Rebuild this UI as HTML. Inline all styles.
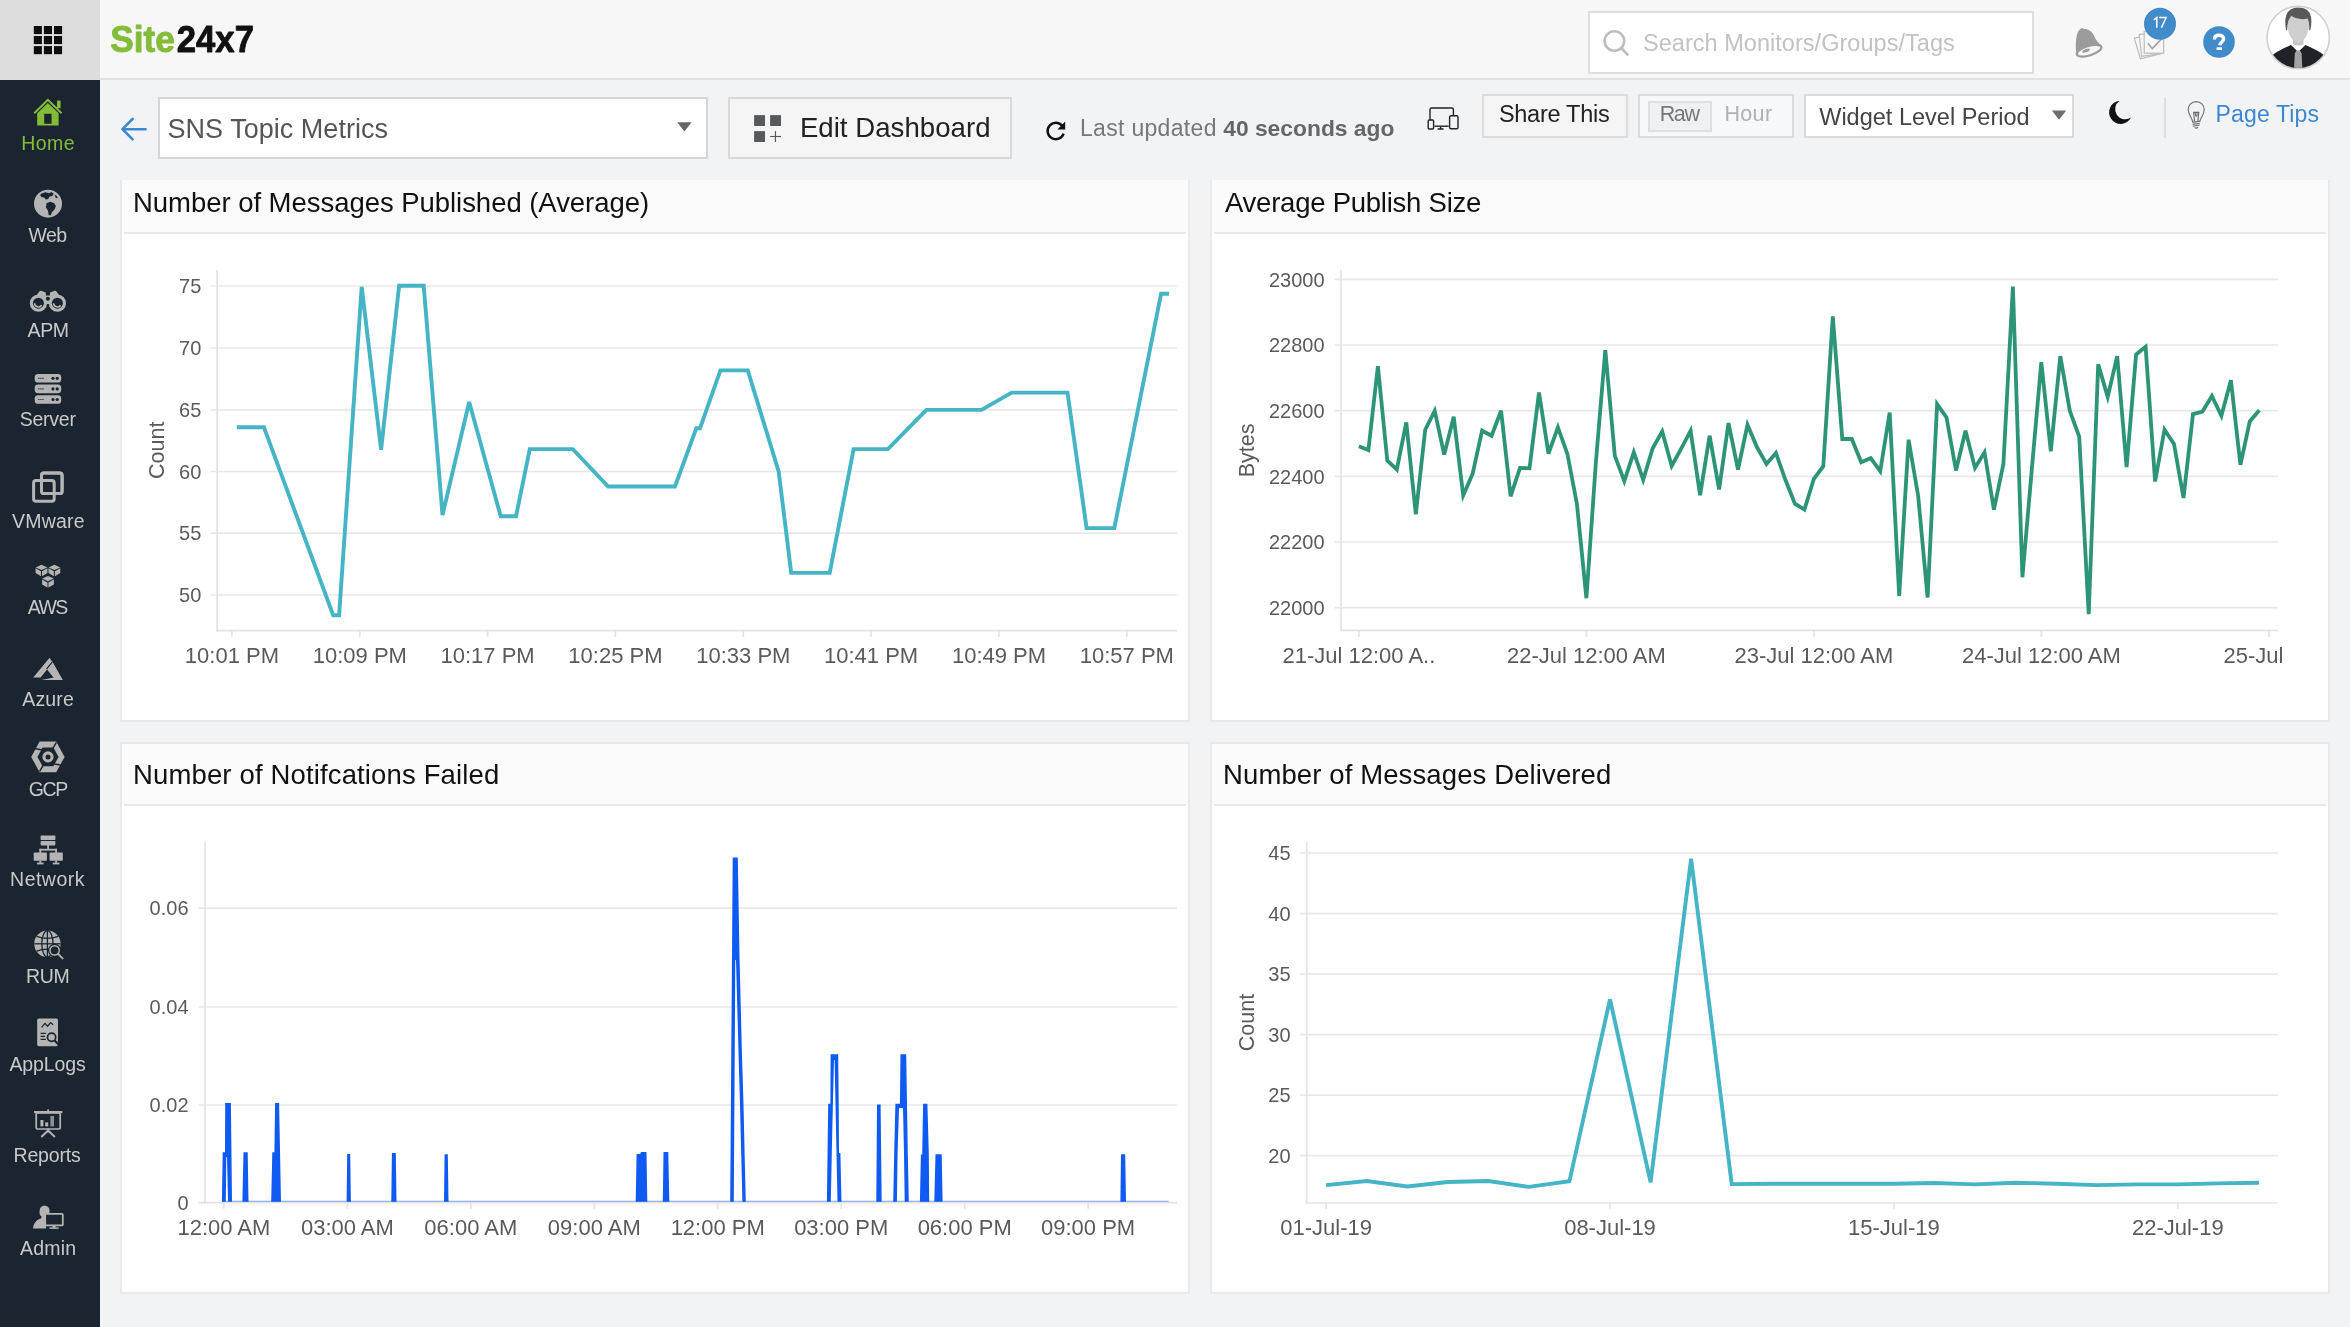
<!DOCTYPE html>
<html><head><meta charset="utf-8"><title>Site24x7 - SNS Topic Metrics</title>
<style>
html,body{margin:0;padding:0}
body{width:2350px;height:1327px;overflow:hidden;position:relative;background:#f2f3f5;font-family:"Liberation Sans", sans-serif;}
.abs{position:absolute;box-sizing:border-box}
.tx{position:absolute;white-space:nowrap;font-family:"Liberation Sans", sans-serif;}
.header{left:0;top:0;width:2350px;height:80px;background:#f7f7f7;border-bottom:2px solid #e2e2e2}
.apps{left:0;top:0;width:100px;height:80px;background:#dddddd}
.sidebar{left:0;top:80px;width:100px;height:1247px;background:#1b2530}
.widget{background:#fff;border:2px solid #e9e9ea;border-top:none}
.whead{background:#fafafa}
.wline{background:#e8e8e8;height:2px}
.btn{background:#f5f5f5;border:2px solid #dcdcdc}
.inp{background:#fff;border:2px solid #dadada}
svg{position:absolute;left:0;top:0;font-family:"Liberation Sans", sans-serif;will-change:transform}
</style></head><body>
<div class="abs header"></div>
<div class="abs apps"></div>
<div class="abs sidebar"></div>

<!-- search -->
<div class="abs inp" style="left:1588px;top:10.5px;width:446px;height:63px;border-color:#dedede"></div>

<!-- toolbar boxes -->
<div class="abs inp" style="left:158px;top:96.5px;width:550px;height:62.5px;border-color:#d6d6d6"></div>
<div class="abs btn" style="left:728px;top:96.5px;width:284px;height:62.5px;border-color:#d9d9d9"></div>
<div class="abs btn" style="left:1482px;top:94px;width:146px;height:44px"></div>
<div class="abs btn" style="left:1638px;top:94px;width:156px;height:44px;background:#f7f8f9"></div>
<div class="abs btn" style="left:1647.5px;top:100.5px;width:64.5px;height:31.5px;background:#eff0f1;border-color:#dfdfdf"></div>
<div class="abs inp" style="left:1804px;top:94px;width:270px;height:44px;border-color:#d9d9d9"></div>
<div class="abs" style="left:2164px;top:98px;width:2px;height:39.5px;background:#dcdde0"></div>

<!-- widgets -->
<div class="abs widget" style="left:120.3px;top:180px;width:1069.6px;height:542px"></div>
<div class="abs whead" style="left:122.3px;top:180px;width:1065.6px;height:52px"></div>
<div class="abs wline" style="left:124px;top:232px;width:1062px"></div>

<div class="abs widget" style="left:1210px;top:180px;width:1120px;height:542px"></div>
<div class="abs whead" style="left:1212px;top:180px;width:1116px;height:52px"></div>
<div class="abs wline" style="left:1214px;top:232px;width:1112px"></div>

<div class="abs widget" style="left:120.3px;top:742.4px;width:1069.6px;height:551.4px;border-top:2px solid #e9e9ea"></div>
<div class="abs whead" style="left:122.3px;top:744.4px;width:1065.6px;height:60px"></div>
<div class="abs wline" style="left:124px;top:804.2px;width:1062px"></div>

<div class="abs widget" style="left:1210px;top:742.4px;width:1120px;height:551.4px;border-top:2px solid #e9e9ea"></div>
<div class="abs whead" style="left:1212px;top:744.4px;width:1116px;height:60px"></div>
<div class="abs wline" style="left:1214px;top:804.2px;width:1112px"></div>

<svg width="2350" height="1327" viewBox="0 0 2350 1327">
<g id="chart1"><line x1="210.5" y1="286" x2="1177" y2="286" stroke="#e8e8e8" stroke-width="1.7"/>
<text transform="translate(201.3,293.2) scale(1,1.04)" text-anchor="end" font-size="20" fill="#5a5a5a">75</text>
<line x1="210.5" y1="348" x2="1177" y2="348" stroke="#e8e8e8" stroke-width="1.7"/>
<text transform="translate(201.3,355.2) scale(1,1.04)" text-anchor="end" font-size="20" fill="#5a5a5a">70</text>
<line x1="210.5" y1="409.8" x2="1177" y2="409.8" stroke="#e8e8e8" stroke-width="1.7"/>
<text transform="translate(201.3,417.0) scale(1,1.04)" text-anchor="end" font-size="20" fill="#5a5a5a">65</text>
<line x1="210.5" y1="471.5" x2="1177" y2="471.5" stroke="#e8e8e8" stroke-width="1.7"/>
<text transform="translate(201.3,478.7) scale(1,1.04)" text-anchor="end" font-size="20" fill="#5a5a5a">60</text>
<line x1="210.5" y1="533.2" x2="1177" y2="533.2" stroke="#e8e8e8" stroke-width="1.7"/>
<text transform="translate(201.3,540.4) scale(1,1.04)" text-anchor="end" font-size="20" fill="#5a5a5a">55</text>
<line x1="210.5" y1="595" x2="1177" y2="595" stroke="#e8e8e8" stroke-width="1.7"/>
<text transform="translate(201.3,602.2) scale(1,1.04)" text-anchor="end" font-size="20" fill="#5a5a5a">50</text>
<line x1="217.1" y1="270" x2="217.1" y2="631.5" stroke="#e3e3e3" stroke-width="1.7"/>
<line x1="216.3" y1="630.7" x2="1177" y2="630.7" stroke="#e3e3e3" stroke-width="1.7"/>
<line x1="231.9" y1="631" x2="231.9" y2="636.8" stroke="#e3e3e3" stroke-width="1.7"/>
<text transform="translate(231.9,663.2) scale(1,1.04)" text-anchor="middle" font-size="22" fill="#5a5a5a">10:01 PM</text>
<line x1="359.8" y1="631" x2="359.8" y2="636.8" stroke="#e3e3e3" stroke-width="1.7"/>
<text transform="translate(359.8,663.2) scale(1,1.04)" text-anchor="middle" font-size="22" fill="#5a5a5a">10:09 PM</text>
<line x1="487.6" y1="631" x2="487.6" y2="636.8" stroke="#e3e3e3" stroke-width="1.7"/>
<text transform="translate(487.6,663.2) scale(1,1.04)" text-anchor="middle" font-size="22" fill="#5a5a5a">10:17 PM</text>
<line x1="615.4" y1="631" x2="615.4" y2="636.8" stroke="#e3e3e3" stroke-width="1.7"/>
<text transform="translate(615.4,663.2) scale(1,1.04)" text-anchor="middle" font-size="22" fill="#5a5a5a">10:25 PM</text>
<line x1="743.3" y1="631" x2="743.3" y2="636.8" stroke="#e3e3e3" stroke-width="1.7"/>
<text transform="translate(743.3,663.2) scale(1,1.04)" text-anchor="middle" font-size="22" fill="#5a5a5a">10:33 PM</text>
<line x1="871.1" y1="631" x2="871.1" y2="636.8" stroke="#e3e3e3" stroke-width="1.7"/>
<text transform="translate(871.1,663.2) scale(1,1.04)" text-anchor="middle" font-size="22" fill="#5a5a5a">10:41 PM</text>
<line x1="999.0" y1="631" x2="999.0" y2="636.8" stroke="#e3e3e3" stroke-width="1.7"/>
<text transform="translate(999.0,663.2) scale(1,1.04)" text-anchor="middle" font-size="22" fill="#5a5a5a">10:49 PM</text>
<line x1="1126.8" y1="631" x2="1126.8" y2="636.8" stroke="#e3e3e3" stroke-width="1.7"/>
<text transform="translate(1126.8,663.2) scale(1,1.04)" text-anchor="middle" font-size="22" fill="#5a5a5a">10:57 PM</text>
<text transform="translate(164.4,450.3) rotate(-90) scale(1,1.04)" text-anchor="middle" font-size="21.5" fill="#5a5a5a">Count</text>
<polyline points="236.8,427.2 263.9,427.2 333.2,615.2 339.1,615.2 361.7,286.8 381.1,449.8 399.1,285.8 423.7,285.8 442.5,515.0 469.2,401.9 500.7,516.3 516.0,516.3 529.8,449.1 572.8,449.1 608.2,486.5 675.0,486.5 696.3,428.3 700.0,428.3 720.4,370.4 747.8,370.4 778.7,471.6 791.2,572.9 829.7,572.9 853.6,449.1 887.9,449.1 926.4,409.9 981.5,409.9 1011.7,392.6 1067.5,392.6 1086.6,528.1 1114.3,528.1 1161.1,293.7 1169.1,293.7" fill="none" stroke="#45b4c4" stroke-width="3.9" stroke-linejoin="miter" stroke-miterlimit="4"/></g>
<g id="chart2"><line x1="1334.5" y1="279.3" x2="2278" y2="279.3" stroke="#e8e8e8" stroke-width="1.7"/>
<text transform="translate(1324.5,286.5) scale(1,1.04)" text-anchor="end" font-size="20" fill="#5a5a5a">23000</text>
<line x1="1334.5" y1="345" x2="2278" y2="345" stroke="#e8e8e8" stroke-width="1.7"/>
<text transform="translate(1324.5,352.2) scale(1,1.04)" text-anchor="end" font-size="20" fill="#5a5a5a">22800</text>
<line x1="1334.5" y1="410.7" x2="2278" y2="410.7" stroke="#e8e8e8" stroke-width="1.7"/>
<text transform="translate(1324.5,417.9) scale(1,1.04)" text-anchor="end" font-size="20" fill="#5a5a5a">22600</text>
<line x1="1334.5" y1="476.3" x2="2278" y2="476.3" stroke="#e8e8e8" stroke-width="1.7"/>
<text transform="translate(1324.5,483.5) scale(1,1.04)" text-anchor="end" font-size="20" fill="#5a5a5a">22400</text>
<line x1="1334.5" y1="542" x2="2278" y2="542" stroke="#e8e8e8" stroke-width="1.7"/>
<text transform="translate(1324.5,549.2) scale(1,1.04)" text-anchor="end" font-size="20" fill="#5a5a5a">22200</text>
<line x1="1334.5" y1="607.6" x2="2278" y2="607.6" stroke="#e8e8e8" stroke-width="1.7"/>
<text transform="translate(1324.5,614.8) scale(1,1.04)" text-anchor="end" font-size="20" fill="#5a5a5a">22000</text>
<line x1="1341" y1="270" x2="1341" y2="631" stroke="#e3e3e3" stroke-width="1.7"/>
<line x1="1340.2" y1="630.3" x2="2278" y2="630.3" stroke="#e3e3e3" stroke-width="1.7"/>
<line x1="1358.9" y1="631" x2="1358.9" y2="636.8" stroke="#e3e3e3" stroke-width="1.7"/>
<text transform="translate(1358.9,663.2) scale(1,1.04)" text-anchor="middle" font-size="22" fill="#5a5a5a">21-Jul 12:00 A..</text>
<line x1="1586.4" y1="631" x2="1586.4" y2="636.8" stroke="#e3e3e3" stroke-width="1.7"/>
<text transform="translate(1586.4,663.2) scale(1,1.04)" text-anchor="middle" font-size="22" fill="#5a5a5a">22-Jul 12:00 AM</text>
<line x1="1813.9" y1="631" x2="1813.9" y2="636.8" stroke="#e3e3e3" stroke-width="1.7"/>
<text transform="translate(1813.9,663.2) scale(1,1.04)" text-anchor="middle" font-size="22" fill="#5a5a5a">23-Jul 12:00 AM</text>
<line x1="2041.4" y1="631" x2="2041.4" y2="636.8" stroke="#e3e3e3" stroke-width="1.7"/>
<text transform="translate(2041.4,663.2) scale(1,1.04)" text-anchor="middle" font-size="22" fill="#5a5a5a">24-Jul 12:00 AM</text>
<line x1="2268.8" y1="631" x2="2268.8" y2="636.8" stroke="#e3e3e3" stroke-width="1.7"/>
<text transform="translate(2283.5,663.2) scale(1,1.04)" text-anchor="end" font-size="22" fill="#5a5a5a">25-Jul</text>
<text transform="translate(1253.6,450.5) rotate(-90) scale(1,1.04)" text-anchor="middle" font-size="21.5" fill="#5a5a5a">Bytes</text>
<polyline points="1358.9,446.3 1368.4,450.0 1377.9,366.1 1387.3,460.6 1396.8,469.5 1406.3,422.4 1415.8,514.3 1425.2,429.7 1434.7,410.8 1444.2,454.6 1453.7,416.8 1463.2,495.4 1472.6,473.8 1482.1,430.7 1491.6,435.7 1501.1,410.8 1510.6,496.4 1520.0,467.9 1529.5,468.2 1539.0,392.6 1548.5,453.6 1557.9,427.4 1567.4,453.9 1576.9,503.7 1586.4,598.2 1595.9,462.2 1605.3,350.1 1614.8,455.6 1624.3,481.1 1633.8,452.3 1643.2,479.8 1652.7,448.3 1662.2,431.4 1671.7,465.9 1681.2,448.6 1690.6,430.7 1700.1,495.1 1709.6,435.7 1719.1,489.4 1728.5,423.1 1738.0,469.5 1747.5,424.8 1757.0,447.3 1766.5,463.9 1775.9,452.9 1785.4,479.8 1794.9,503.7 1804.4,509.6 1813.9,478.8 1823.3,466.2 1832.8,316.3 1842.3,439.0 1851.8,439.0 1861.2,462.2 1870.7,458.2 1880.2,471.2 1889.7,412.5 1899.2,595.9 1908.6,439.7 1918.1,495.4 1927.6,597.5 1937.1,404.2 1946.5,417.5 1956.0,470.5 1965.5,430.7 1975.0,467.9 1984.5,452.3 1993.9,509.6 2003.4,463.9 2012.9,286.5 2022.4,577.3 2031.8,469.5 2041.3,362.1 2050.8,451.3 2060.3,356.1 2069.8,410.8 2079.2,436.7 2088.7,614.1 2098.2,364.4 2107.7,396.9 2117.2,356.1 2126.6,467.2 2136.1,354.5 2145.6,346.8 2155.1,481.5 2164.5,429.7 2174.0,444.0 2183.5,498.0 2193.0,414.1 2202.5,411.5 2211.9,395.9 2221.4,415.8 2230.9,380.3 2240.4,464.9 2249.8,421.4 2259.3,410.2" fill="none" stroke="#2e9478" stroke-width="3.8" stroke-linejoin="miter" stroke-miterlimit="4"/></g>
<g id="chart3"><line x1="198.5" y1="908.1" x2="1177" y2="908.1" stroke="#e8e8e8" stroke-width="1.7"/>
<text transform="translate(188.5,915.3) scale(1,1.04)" text-anchor="end" font-size="20" fill="#5a5a5a">0.06</text>
<line x1="198.5" y1="1007" x2="1177" y2="1007" stroke="#e8e8e8" stroke-width="1.7"/>
<text transform="translate(188.5,1014.2) scale(1,1.04)" text-anchor="end" font-size="20" fill="#5a5a5a">0.04</text>
<line x1="198.5" y1="1105" x2="1177" y2="1105" stroke="#e8e8e8" stroke-width="1.7"/>
<text transform="translate(188.5,1112.2) scale(1,1.04)" text-anchor="end" font-size="20" fill="#5a5a5a">0.02</text>
<line x1="198.5" y1="1202.7" x2="1177" y2="1202.7" stroke="#e3e3e3" stroke-width="1.7"/>
<text transform="translate(188.5,1209.9) scale(1,1.04)" text-anchor="end" font-size="20" fill="#5a5a5a">0</text>
<line x1="205" y1="842" x2="205" y2="1203.5" stroke="#e3e3e3" stroke-width="1.7"/>
<line x1="223.9" y1="1203" x2="223.9" y2="1208.8" stroke="#e3e3e3" stroke-width="1.7"/>
<text transform="translate(223.9,1235.2) scale(1,1.04)" text-anchor="middle" font-size="22" fill="#5a5a5a">12:00 AM</text>
<line x1="347.4" y1="1203" x2="347.4" y2="1208.8" stroke="#e3e3e3" stroke-width="1.7"/>
<text transform="translate(347.4,1235.2) scale(1,1.04)" text-anchor="middle" font-size="22" fill="#5a5a5a">03:00 AM</text>
<line x1="470.8" y1="1203" x2="470.8" y2="1208.8" stroke="#e3e3e3" stroke-width="1.7"/>
<text transform="translate(470.8,1235.2) scale(1,1.04)" text-anchor="middle" font-size="22" fill="#5a5a5a">06:00 AM</text>
<line x1="594.3" y1="1203" x2="594.3" y2="1208.8" stroke="#e3e3e3" stroke-width="1.7"/>
<text transform="translate(594.3,1235.2) scale(1,1.04)" text-anchor="middle" font-size="22" fill="#5a5a5a">09:00 AM</text>
<line x1="717.7" y1="1203" x2="717.7" y2="1208.8" stroke="#e3e3e3" stroke-width="1.7"/>
<text transform="translate(717.7,1235.2) scale(1,1.04)" text-anchor="middle" font-size="22" fill="#5a5a5a">12:00 PM</text>
<line x1="841.2" y1="1203" x2="841.2" y2="1208.8" stroke="#e3e3e3" stroke-width="1.7"/>
<text transform="translate(841.2,1235.2) scale(1,1.04)" text-anchor="middle" font-size="22" fill="#5a5a5a">03:00 PM</text>
<line x1="964.7" y1="1203" x2="964.7" y2="1208.8" stroke="#e3e3e3" stroke-width="1.7"/>
<text transform="translate(964.7,1235.2) scale(1,1.04)" text-anchor="middle" font-size="22" fill="#5a5a5a">06:00 PM</text>
<line x1="1088.1" y1="1203" x2="1088.1" y2="1208.8" stroke="#e3e3e3" stroke-width="1.7"/>
<text transform="translate(1088.1,1235.2) scale(1,1.04)" text-anchor="middle" font-size="22" fill="#5a5a5a">09:00 PM</text>
<line x1="222" y1="1201.3" x2="1168.7" y2="1201.3" stroke="#7aa3f6" stroke-width="1.1"/>
<path d="M221.9,1201.8 L222.7,1152.3 L225.0,1152.3 L225.2,1103.0 L230.9,1103.0 L232.0,1201.8Z M225.8,1201.8 L226.3,1157.0 L227.0,1157.0 L228.0,1201.8Z " fill="#0f5af0" fill-rule="evenodd"/>
<path d="M242.4,1201.8 L243.5,1152.3 L247.7,1152.3 L248.5,1201.8Z " fill="#0f5af0" fill-rule="evenodd"/>
<path d="M271.2,1201.8 L272.3,1152.3 L274.4,1152.3 L275.1,1103.0 L279.1,1103.0 L281.0,1201.8Z " fill="#0f5af0" fill-rule="evenodd"/>
<path d="M346.6,1201.8 L347.2,1154.0 L350.2,1154.0 L350.9,1201.8Z " fill="#0f5af0" fill-rule="evenodd"/>
<path d="M391.3,1201.8 L391.9,1152.9 L395.8,1152.9 L396.5,1201.8Z " fill="#0f5af0" fill-rule="evenodd"/>
<path d="M444.0,1201.8 L444.6,1154.3 L447.8,1154.3 L448.5,1201.8Z " fill="#0f5af0" fill-rule="evenodd"/>
<path d="M635.7,1201.8 L636.6,1154.0 L640.3,1154.0 L640.9,1152.0 L646.5,1152.0 L647.3,1201.8Z " fill="#0f5af0" fill-rule="evenodd"/>
<path d="M662.8,1201.8 L663.5,1152.0 L668.3,1152.0 L669.3,1201.8Z " fill="#0f5af0" fill-rule="evenodd"/>
<path d="M730.2,1201.8 L732.7,857.4 L737.8,857.4 L739.5,957.0 L742.0,1055.8 L743.5,1104.3 L744.6,1152.9 L745.8,1201.8Z M733.8,1201.8 L735.3,960.0 L736.0,960.0 L738.6,1055.8 L740.0,1104.3 L741.2,1152.9 L742.4,1201.8Z " fill="#0f5af0" fill-rule="evenodd"/>
<path d="M826.9,1201.8 L828.2,1103.7 L830.4,1103.7 L830.6,1054.3 L838.2,1054.3 L838.7,1103.7 L839.0,1153.0 L840.4,1153.0 L841.5,1201.8Z M830.8,1201.8 L831.8,1153.0 L832.9,1103.7 L834.0,1060.0 L834.6,1060.0 L835.5,1103.7 L836.5,1153.0 L837.5,1201.8Z " fill="#0f5af0" fill-rule="evenodd"/>
<path d="M876.3,1201.8 L877.0,1104.5 L880.6,1104.5 L881.7,1201.8Z " fill="#0f5af0" fill-rule="evenodd"/>
<path d="M893.2,1201.8 L894.2,1153.0 L895.4,1103.7 L899.9,1103.7 L900.5,1054.3 L906.2,1054.3 L907.0,1103.7 L907.8,1153.0 L908.8,1201.8Z M896.9,1201.8 L897.6,1153.0 L899.0,1108.0 L903.0,1108.0 L904.0,1153.0 L904.7,1201.8Z " fill="#0f5af0" fill-rule="evenodd"/>
<path d="M919.9,1201.8 L920.9,1154.5 L922.2,1154.5 L923.1,1103.7 L927.4,1103.7 L928.8,1153.0 L929.2,1201.8Z " fill="#0f5af0" fill-rule="evenodd"/>
<path d="M934.3,1201.8 L935.5,1154.2 L941.7,1154.2 L942.6,1201.8Z " fill="#0f5af0" fill-rule="evenodd"/>
<path d="M1120.4,1201.8 L1121.0,1154.3 L1125.2,1154.3 L1126.0,1201.8Z " fill="#0f5af0" fill-rule="evenodd"/></g>
<g id="chart4"><line x1="1300" y1="853" x2="2278" y2="853" stroke="#e8e8e8" stroke-width="1.7"/>
<text transform="translate(1290.5,860.2) scale(1,1.04)" text-anchor="end" font-size="20" fill="#5a5a5a">45</text>
<line x1="1300" y1="913.6" x2="2278" y2="913.6" stroke="#e8e8e8" stroke-width="1.7"/>
<text transform="translate(1290.5,920.8) scale(1,1.04)" text-anchor="end" font-size="20" fill="#5a5a5a">40</text>
<line x1="1300" y1="974.1" x2="2278" y2="974.1" stroke="#e8e8e8" stroke-width="1.7"/>
<text transform="translate(1290.5,981.3) scale(1,1.04)" text-anchor="end" font-size="20" fill="#5a5a5a">35</text>
<line x1="1300" y1="1034.7" x2="2278" y2="1034.7" stroke="#e8e8e8" stroke-width="1.7"/>
<text transform="translate(1290.5,1041.9) scale(1,1.04)" text-anchor="end" font-size="20" fill="#5a5a5a">30</text>
<line x1="1300" y1="1095.2" x2="2278" y2="1095.2" stroke="#e8e8e8" stroke-width="1.7"/>
<text transform="translate(1290.5,1102.4) scale(1,1.04)" text-anchor="end" font-size="20" fill="#5a5a5a">25</text>
<line x1="1300" y1="1155.7" x2="2278" y2="1155.7" stroke="#e8e8e8" stroke-width="1.7"/>
<text transform="translate(1290.5,1162.9) scale(1,1.04)" text-anchor="end" font-size="20" fill="#5a5a5a">20</text>
<line x1="1306.7" y1="842" x2="1306.7" y2="1203.8" stroke="#e3e3e3" stroke-width="1.7"/>
<line x1="1305.9" y1="1203" x2="2278" y2="1203" stroke="#e3e3e3" stroke-width="1.7"/>
<line x1="1326.1" y1="1203" x2="1326.1" y2="1208.8" stroke="#e3e3e3" stroke-width="1.7"/>
<text transform="translate(1326.1,1235.2) scale(1,1.04)" text-anchor="middle" font-size="22" fill="#5a5a5a">01-Jul-19</text>
<line x1="1610.0" y1="1203" x2="1610.0" y2="1208.8" stroke="#e3e3e3" stroke-width="1.7"/>
<text transform="translate(1610.0,1235.2) scale(1,1.04)" text-anchor="middle" font-size="22" fill="#5a5a5a">08-Jul-19</text>
<line x1="1893.9" y1="1203" x2="1893.9" y2="1208.8" stroke="#e3e3e3" stroke-width="1.7"/>
<text transform="translate(1893.9,1235.2) scale(1,1.04)" text-anchor="middle" font-size="22" fill="#5a5a5a">15-Jul-19</text>
<line x1="2177.8" y1="1203" x2="2177.8" y2="1208.8" stroke="#e3e3e3" stroke-width="1.7"/>
<text transform="translate(2177.8,1235.2) scale(1,1.04)" text-anchor="middle" font-size="22" fill="#5a5a5a">22-Jul-19</text>
<text transform="translate(1253.6,1022.5) rotate(-90) scale(1,1.04)" text-anchor="middle" font-size="21.5" fill="#5a5a5a">Count</text>
<polyline points="1326.1,1185.1 1366.7,1181.0 1407.2,1186.5 1447.8,1182.0 1488.3,1181.0 1528.9,1186.9 1569.4,1181.3 1610.0,999.3 1650.6,1182.3 1691.1,858.8 1731.7,1184.1 1772.2,1183.7 1812.8,1183.7 1853.3,1183.7 1893.9,1183.7 1934.5,1183.0 1975.0,1184.4 2015.6,1182.7 2056.1,1183.7 2096.7,1185.1 2137.2,1184.4 2177.8,1184.4 2218.4,1183.4 2258.9,1182.7" fill="none" stroke="#45b4c4" stroke-width="3.9" stroke-linejoin="miter" stroke-miterlimit="4"/></g>
<g id="icons"><rect x="33.8" y="26.0" width="8.1" height="8.1" fill="#0d0d0d"/>
<rect x="43.9" y="26.0" width="8.1" height="8.1" fill="#0d0d0d"/>
<rect x="54.0" y="26.0" width="8.1" height="8.1" fill="#0d0d0d"/>
<rect x="33.8" y="36.0" width="8.1" height="8.1" fill="#0d0d0d"/>
<rect x="43.9" y="36.0" width="8.1" height="8.1" fill="#0d0d0d"/>
<rect x="54.0" y="36.0" width="8.1" height="8.1" fill="#0d0d0d"/>
<rect x="33.8" y="46.1" width="8.1" height="8.1" fill="#0d0d0d"/>
<rect x="43.9" y="46.1" width="8.1" height="8.1" fill="#0d0d0d"/>
<rect x="54.0" y="46.1" width="8.1" height="8.1" fill="#0d0d0d"/>
<g fill="#84bc3a" fill-rule="evenodd"><path d="M33.6,112.6 L47.9,98.6 L62.2,112.6 L60.9,113.9 L47.9,101.3 L34.9,113.9 Z"/><path d="M37.2,113.2 L47.9,102.9 L58.6,113.2 L58.6,125.5 L37.2,125.5 Z M44.2,113.8 L44.2,123.8 L51.6,123.8 L51.6,113.8 Z"/><rect x="57" y="100.6" width="3.6" height="7.6"/></g>
<circle cx="48" cy="203.7" r="14" fill="#b4b4b4"/>
<path d="M41.5,193.5 l4,-1.2 3.4,1 2.6,-1.2 2.2,1.6 -1.4,2.4 -3,0.6 -1,2.4 -2.6,0.4 -1.6,-2 -2.8,-0.6 -1.2,-2 z M46.5,203.2 l3.6,-1.4 3.8,1.2 2,3 -1.4,3.6 -2.6,2.6 -1.2,3.4 -2,-0.6 -0.8,-4.4 -2,-3.2 z M54.5,194.5 l2.6,1.8 0.6,2 -2,-0.4 z" fill="#1b2530"/>
<g fill="#b4b4b4"><circle cx="38.4" cy="303.2" r="8.6"/><circle cx="57.4" cy="303.2" r="8.6"/><path d="M36,296 L39.5,291.2 Q40.3,290.4 41.3,290.8 L45.8,292.6 L45.8,299 Z M59.8,296 L56.3,291.2 Q55.5,290.4 54.5,290.8 L50,292.6 L50,299 Z"/><rect x="44" y="295.5" width="8" height="8.5" rx="1"/></g>
<circle cx="38.4" cy="303.2" r="5.5" fill="#1b2530"/><circle cx="57.4" cy="303.2" r="5.5" fill="#1b2530"/>
<path d="M34.6,303.2 a3.8,3.8 0 0 0 7,2" fill="none" stroke="#b4b4b4" stroke-width="1.6"/>
<path d="M53.6,303.2 a3.8,3.8 0 0 0 7,2" fill="none" stroke="#b4b4b4" stroke-width="1.6"/>
<circle cx="47.9" cy="298.8" r="2" fill="#1b2530"/>
<rect x="34.7" y="374.0" width="26.5" height="8.6" rx="3.4" fill="#b4b4b4"/>
<circle cx="53" cy="378.3" r="1.6" fill="#1b2530"/><circle cx="57.2" cy="378.3" r="1.6" fill="#1b2530"/>
<line x1="38.2" y1="378.3" x2="43.6" y2="378.3" stroke="#1b2530" stroke-width="1.2" stroke-dasharray="1.2 0.9"/>
<rect x="34.7" y="384.6" width="26.5" height="8.6" rx="3.4" fill="#b4b4b4"/>
<circle cx="53" cy="388.9" r="1.6" fill="#1b2530"/><circle cx="57.2" cy="388.9" r="1.6" fill="#1b2530"/>
<line x1="38.2" y1="388.9" x2="43.6" y2="388.9" stroke="#1b2530" stroke-width="1.2" stroke-dasharray="1.2 0.9"/>
<rect x="34.7" y="395.2" width="26.5" height="8.6" rx="3.4" fill="#b4b4b4"/>
<circle cx="53" cy="399.5" r="1.6" fill="#1b2530"/><circle cx="57.2" cy="399.5" r="1.6" fill="#1b2530"/>
<line x1="38.2" y1="399.5" x2="43.6" y2="399.5" stroke="#1b2530" stroke-width="1.2" stroke-dasharray="1.2 0.9"/>
<rect x="41.5" y="473" width="20.6" height="20.6" rx="2.4" fill="none" stroke="#b4b4b4" stroke-width="3"/>
<rect x="33.6" y="480.6" width="20.6" height="20.6" rx="2.4" fill="#1b2530" stroke="#b4b4b4" stroke-width="3"/>
<path d="M43,482.1 L43,492.1 L52.7,492.1" fill="none" stroke="#b4b4b4" stroke-width="3" opacity="0"/>
<rect x="41.5" y="473" width="20.6" height="20.6" rx="2.4" fill="none" stroke="#b4b4b4" stroke-width="3"/>
<path d="M41.5,564.8 L47.4,567.4 L41.5,570.1 L35.6,567.4 Z M35.6,568.3 L41.0,571.2 L41.0,576.3 L35.6,573.1 Z M47.4,568.3 L42.0,571.2 L42.0,576.3 L47.4,573.1 Z" fill="#b4b4b4"/>
<path d="M54.4,564.8 L60.3,567.4 L54.4,570.1 L48.5,567.4 Z M48.5,568.3 L53.9,571.2 L53.9,576.3 L48.5,573.1 Z M60.3,568.3 L54.9,571.2 L54.9,576.3 L60.3,573.1 Z" fill="#b4b4b4"/>
<path d="M47.95,576.0 L53.9,578.6 L47.95,581.3 L42.1,578.6 Z M42.1,579.5 L47.5,582.5 L47.5,587.5 L42.1,584.4 Z M53.9,579.5 L48.4,582.5 L48.4,587.5 L53.9,584.4 Z" fill="#b4b4b4"/>
<path d="M49.6,657.8 L33.2,677.6 L40.6,677.6 L52.6,662.6 Z M52.2,661.2 L62.8,680 L41.2,680 L53.6,677.4 L46.2,668.4 Z" fill="#b4b4b4"/>
<path d="M39.6,741.6 L56.2,741.6 L64.6,756.9 L56.2,772.2 L39.6,772.2 L31.2,756.9 Z" fill="#b4b4b4"/>
<path d="M42.6,747.6 L53.4,747.6 L58.6,756.9 L53.4,766.2 L42.6,766.2 L37.4,756.9 Z" fill="#1b2530"/>
<circle cx="48" cy="756.9" r="5.6" fill="#b4b4b4"/><circle cx="48" cy="756.9" r="2.5" fill="#1b2530"/>
<path d="M35.4,748.8 L43.2,750 M60.6,765 L52.8,763.8 M56.4,742.4 L52.4,749.2 M39.6,771.4 L43.6,764.6" stroke="#1b2530" stroke-width="1.4" fill="none"/>
<g fill="#b4b4b4"><rect x="40.6" y="835.6" width="14.8" height="4.4" rx="0.8"/><rect x="40.6" y="841" width="14.8" height="4.4" rx="0.8"/><rect x="47.2" y="845" width="1.8" height="4.6"/><rect x="39.4" y="848.8" width="17.6" height="1.8"/><rect x="39.4" y="848.8" width="1.8" height="4.4"/><rect x="55.2" y="848.8" width="1.8" height="4.4"/><rect x="33.7" y="852.6" width="13.2" height="8.2" rx="0.8"/><rect x="49.6" y="852.6" width="13.2" height="8.2" rx="0.8"/><rect x="39.4" y="860.6" width="1.8" height="2.4"/><rect x="55.2" y="860.6" width="1.8" height="2.4"/><rect x="37" y="862.6" width="6.6" height="1.8"/><rect x="52.8" y="862.6" width="6.6" height="1.8"/></g>
<circle cx="47.4" cy="943.8" r="13.2" fill="#b4b4b4"/>
<g fill="none" stroke="#1b2530" stroke-width="1.3"><ellipse cx="47.4" cy="943.8" rx="5.6" ry="13.2"/><line x1="47.4" y1="930.6" x2="47.4" y2="957"/><line x1="34.2" y1="943.8" x2="60.6" y2="943.8"/><path d="M36.6,936.4 Q47.4,940.4 58.2,936.4 M36.6,951.2 Q47.4,947.2 58.2,951.2"/></g>
<circle cx="54.6" cy="950.4" r="6.6" fill="#1b2530"/><circle cx="54.6" cy="950.4" r="4.6" fill="none" stroke="#b4b4b4" stroke-width="1.5"/><line x1="58" y1="953.8" x2="62.6" y2="958.4" stroke="#b4b4b4" stroke-width="1.9" stroke-linecap="round"/>
<rect x="37.2" y="1018.6" width="20.8" height="27.6" rx="1.6" fill="#b4b4b4"/>
<path d="M41.6,1027.4 L45,1023.4 L47.6,1026.2 L50.6,1022.6 L53.2,1024.8" fill="none" stroke="#1b2530" stroke-width="1.3"/>
<path d="M40.6,1033.4 h5.2 M40.6,1036.4 h4.4 M40.6,1039.4 h5.2" stroke="#1b2530" stroke-width="1.2"/>
<circle cx="51.6" cy="1037.2" r="4.1" fill="#b4b4b4" stroke="#1b2530" stroke-width="1.7"/><line x1="54.6" y1="1040.4" x2="58.6" y2="1044.6" stroke="#1b2530" stroke-width="2.2"/>
<rect x="47.2" y="1109.4" width="1.8" height="2.4" fill="#b4b4b4"/>
<rect x="34" y="1111" width="28.4" height="2.2" fill="#b4b4b4"/>
<rect x="36.2" y="1113" width="24" height="16" rx="1.2" fill="none" stroke="#b4b4b4" stroke-width="1.7"/>
<g fill="#b4b4b4"><rect x="40.4" y="1120" width="3" height="6.4"/><rect x="45.2" y="1122.4" width="3" height="4"/><rect x="50.4" y="1116" width="3.6" height="10.4" opacity="0.75"/></g>
<path d="M48.1,1129.6 L48.1,1131.6 M48.1,1130.6 L41.8,1136.4 M48.1,1130.6 L54.4,1136.4" stroke="#b4b4b4" stroke-width="2" fill="none" stroke-linecap="round"/>
<path d="M44.6,1205.4 a5,5.4 0 0 1 5,5.4 a5,5.4 0 0 1 -3.2,5 l0,1.6 l-0.4,11.2 L33,1228.6 c0.6,-5.6 3.4,-8.6 8,-10 l0.6,-2 a5.4,5.6 0 0 1 -2,-5.6 a5,5.4 0 0 1 5,-5.6 z" fill="#b4b4b4"/>
<rect x="45.2" y="1213.8" width="17.6" height="11.6" rx="1" fill="#1b2530" stroke="#b4b4b4" stroke-width="1.8"/>
<rect x="52.4" y="1226" width="3.2" height="1.8" fill="#b4b4b4"/><rect x="49.4" y="1227.4" width="9.2" height="1.5" fill="#b4b4b4"/>
<path d="M145.6,129.2 L123.2,129.2 M132.6,119 L122.4,129.2 L132.6,139.4" fill="none" stroke="#3d87d1" stroke-width="2.6" stroke-linecap="round" stroke-linejoin="round"/>
<path d="M677.2,122.2 L691.6,122.2 L684.4,131.4 Z" fill="#666"/>
<g fill="#58595b"><rect x="754.1" y="115.1" width="10.9" height="10.9"/><rect x="770.1" y="115.1" width="10.9" height="10.9"/><rect x="754.1" y="131.1" width="10.9" height="10.9"/><rect x="770.1" y="135.95" width="10.9" height="1.1"/><rect x="774.85" y="131.1" width="1.2" height="10.9"/></g>
<path d="M1062.6,126.4 A8.2,8.2 0 1 0 1063.6,133.6" fill="none" stroke="#111" stroke-width="2.5"/>
<path d="M1065.2,121.6 L1065.2,129.6 L1057.4,129.6 Z" fill="#111"/>
<g fill="none" stroke="#222" stroke-width="1.4"><path d="M1430,124 L1430,109.6 Q1430,108 1431.6,108 L1451.8,108 Q1453.4,108 1453.4,109.6 L1453.4,115"/><path d="M1434.6,126.2 L1448.6,126.2"/><path d="M1440.6,126.6 L1440.6,128.6 M1437.6,129 L1443.6,129"/><rect x="1449.6" y="115.8" width="8.4" height="13" rx="1.4" fill="#f2f3f5"/><rect x="1428.2" y="120" width="5.4" height="9" rx="1" fill="#f2f3f5"/></g>
<path d="M2051.9,110.4 L2066.2,110.4 L2059,119.8 Z" fill="#6e6e6e"/>
<path d="M2119.6,100.8 A11.6,11.6 0 1 0 2131,117.6 A9.8,9.8 0 0 1 2119.6,100.8 Z" fill="#111"/>
<g fill="none" stroke="#6a6a6a" stroke-width="1.1"><path d="M2192.6,122 C2192.4,117.6 2188.2,115.2 2188.2,109.6 A8,8 0 0 1 2204.2,109.6 C2204.2,115.2 2200,117.6 2199.8,122"/><path d="M2194.6,121.6 L2193.6,112.4 L2198.8,112.4 L2197.8,121.6 M2195.2,112.6 L2195.8,116 L2196.8,116 L2197.2,112.6"/><path d="M2192.4,122.4 L2200,121.2 M2192.6,124.4 L2199.8,123.2 M2192.8,126.2 L2199.6,125 M2194.6,127.4 L2196.2,128.4 L2198,127"/></g>
<circle cx="1614.4" cy="41" r="9.8" fill="none" stroke="#bdbdbd" stroke-width="2.6"/><line x1="1621.6" y1="48.4" x2="1627.4" y2="54.4" stroke="#bdbdbd" stroke-width="2.8" stroke-linecap="round"/>
<path d="M2080.6,28.8 Q2081.8,27.4 2083.2,28.8 C2088.6,29 2092.2,31.6 2094.2,36.2 C2096.2,40.600 2098.6,43.400 2102,46.200 L2076.4,54.400 C2075.5,48 2075.7,42 2076.3,38 C2076.9,33.200 2078.4,30.400 2080.6,28.800 Z" fill="#9b9b9b"/>
<ellipse cx="2089.1" cy="50.700" rx="12.8" ry="4.7" transform="rotate(-17.2 2089.1 50.700)" fill="#f7f7f7" stroke="#9b9b9b" stroke-width="2.2"/>
<ellipse cx="2086" cy="50.700" rx="4" ry="1.5" transform="rotate(-22 2086 50.700)" fill="#9b9b9b"/>
<g fill="#f7f7f7" stroke="#bcbcbc" stroke-width="1.2"><path d="M2134.4,38.2 L2154,33.800 L2160.4,53.800 L2140.4,58.800 Z"/><path d="M2139.2,34.4 L2159,32.600 L2161.8,53.400 L2141.6,56.400 Z"/><rect x="2144.2" y="31.4" width="19.4" height="21.8"/></g>
<path d="M2147.9,43.2 L2152.3,48.600 L2162.4,38" fill="none" stroke="#9c9c9c" stroke-width="1.5"/>
<circle cx="2160" cy="23.800" r="16" fill="#428bca"/>
<path d="M2153.9,19.9 L2156.8,17.5 L2156.8,27.8 M2159,17.5 L2166.1,17.5 L2161.4,27.8" fill="none" stroke="#fff" stroke-width="1.5" stroke-linejoin="miter"/>
<circle cx="2219" cy="42" r="15.8" fill="#428bca"/>
<path d="M2214.4,39.4 C2214.4,36.4 2216.4,35.2 2219,35.2 C2221.6,35.2 2223.6,36.6 2223.6,39 C2223.6,41.8 2220.2,42 2219.8,45.2" fill="none" stroke="#fff" stroke-width="3.4"/><rect x="2216.6" y="47.2" width="5.4" height="2.800" rx="0.6" fill="#fff"/>
<defs><clipPath id="av"><circle cx="2298.2" cy="37.6" r="30.4"/></clipPath></defs>
<circle cx="2298.2" cy="37.600" r="31.2" fill="#fff" stroke="#cfcfcf" stroke-width="1.6"/>
<g clip-path="url(#av)"><path d="M2272,70 L2272,56 Q2274,52.600 2291,45 L2298.2,52 L2305.4,45 Q2322.400,52.600 2324.400,56 L2324.400,70 Z" fill="#1f2326"/><path d="M2291.6,44.4 L2298.2,50.8 L2304.800,44.4 L2304,42 L2292.400,42 Z" fill="#fff"/><path d="M2296.4,50.4 L2300,50.4 L2301.6,53.4 L2302.400,70 L2294,70 L2294.800,53.4 Z" fill="#a3a3a3"/><path d="M2293.200,36 L2303.200,36 L2303.600,44 Q2298.2,47.200 2292.800,44 Z" fill="#c4c4c4"/><path d="M2287.4,24 C2287.4,14 2292,11 2298.2,11 C2304.400,11 2309,14 2309,24 C2309,34 2304,42.600 2298.2,42.600 C2292.400,42.600 2287.4,34 2287.4,24 Z" fill="#cfcfcf"/><path d="M2286.200,30.400 C2282.800,14 2289,7.600 2298.400,7.600 C2308.400,7.600 2314,14 2310.200,30.400 L2309.200,30 C2309.400,24 2308.800,21 2307.600,18.600 C2302,20 2295,18.600 2291.400,15.800 C2288.600,18.800 2287.400,23 2287.200,30 Z" fill="#58595b"/></g></g>
<g id="logo" font-weight="700" font-size="37.6" stroke-width="0.9" stroke-linejoin="round"><text transform="translate(110.3,52.3) scale(0.938,1)" fill="#84bc3a" stroke="#84bc3a">Site</text><text transform="translate(176.8,52.3) scale(0.922,1)" fill="#111111" stroke="#111111">24x7</text></g>
</svg>
<div id="texts" style="position:absolute;left:0;top:0;width:2350px;height:1327px;will-change:transform">
<span class="tx" id="search" style="left:1643.0px;top:28.86px;font-size:23.5px;line-height:28.2px;color:#c2c2c2;font-weight:400;letter-spacing:0.034px">Search Monitors/Groups/Tags</span>
<span class="tx" id="sel" style="left:167.5px;top:112.94px;font-size:27px;line-height:32.4px;color:#555555;font-weight:400;letter-spacing:0.028px">SNS Topic Metrics</span>
<span class="tx" id="edit" style="left:799.9px;top:111.08px;font-size:27.6px;line-height:33.12px;color:#222222;font-weight:400;letter-spacing:0.034px">Edit Dashboard</span>
<span class="tx" id="upd1" style="left:1079.9px;top:114.83px;font-size:23px;line-height:27.6px;color:#777777;font-weight:400;letter-spacing:0.326px">Last updated</span>
<span class="tx" id="upd2" style="left:1223.2px;top:115.02px;font-size:22.8px;line-height:27.36px;color:#666666;font-weight:700;letter-spacing:0.014px">40 seconds ago</span>
<span class="tx" id="share" style="left:1498.9px;top:100.06px;font-size:23.5px;line-height:28.2px;color:#222222;font-weight:400;letter-spacing:-0.265px">Share This</span>
<span class="tx" id="raw" style="left:1659.7px;top:102.15px;font-size:21.5px;line-height:25.8px;color:#777777;font-weight:400;letter-spacing:-1.392px">Raw</span>
<span class="tx" id="hour" style="left:1724.4px;top:102.15px;font-size:21.5px;line-height:25.8px;color:#b0b0b0;font-weight:400;letter-spacing:0.353px">Hour</span>
<span class="tx" id="wlp" style="left:1819.2px;top:102.76px;font-size:23.5px;line-height:28.2px;color:#444444;font-weight:400;letter-spacing:0.009px">Widget Level Period</span>
<span class="tx" id="tips" style="left:2215.6px;top:100.53px;font-size:23px;line-height:27.6px;color:#3d87d1;font-weight:400;letter-spacing:0.137px">Page Tips</span>
<span class="tx" id="t1" style="left:133.0px;top:186.37px;font-size:27.5px;line-height:33.0px;color:#111111;font-weight:400;letter-spacing:-0.041px">Number of Messages Published (Average)</span>
<span class="tx" id="t2" style="left:1225.0px;top:186.37px;font-size:27.5px;line-height:33.0px;color:#111111;font-weight:400;letter-spacing:-0.242px">Average Publish Size</span>
<span class="tx" id="t3" style="left:133.0px;top:758.17px;font-size:27.5px;line-height:33.0px;color:#111111;font-weight:400;letter-spacing:0.145px">Number of Notifcations Failed</span>
<span class="tx" id="t4" style="left:1223.0px;top:758.17px;font-size:27.5px;line-height:33.0px;color:#111111;font-weight:400;letter-spacing:0.116px">Number of Messages Delivered</span>
<span class="tx" id="s_Home" style="left:21.2px;top:132.14px;font-size:19.5px;line-height:23.4px;color:#84bc3a;font-weight:400;letter-spacing:0.443px">Home</span>
<span class="tx" id="s_Web" style="left:28.5px;top:224.04px;font-size:19.5px;line-height:23.4px;color:#c9c9c9;font-weight:400;letter-spacing:-0.599px">Web</span>
<span class="tx" id="s_APM" style="left:27.6px;top:319.14px;font-size:19.5px;line-height:23.4px;color:#c9c9c9;font-weight:400;letter-spacing:-0.406px">APM</span>
<span class="tx" id="s_Server" style="left:19.8px;top:407.74px;font-size:19.5px;line-height:23.4px;color:#c9c9c9;font-weight:400;letter-spacing:-0.268px">Server</span>
<span class="tx" id="s_VMware" style="left:12.0px;top:509.64px;font-size:19.5px;line-height:23.4px;color:#c9c9c9;font-weight:400;letter-spacing:0.206px">VMware</span>
<span class="tx" id="s_AWS" style="left:27.8px;top:596.14px;font-size:19.5px;line-height:23.4px;color:#c9c9c9;font-weight:400;letter-spacing:-1.644px">AWS</span>
<span class="tx" id="s_Azure" style="left:22.3px;top:688.14px;font-size:19.5px;line-height:23.4px;color:#c9c9c9;font-weight:400;letter-spacing:0.151px">Azure</span>
<span class="tx" id="s_GCP" style="left:28.7px;top:778.44px;font-size:19.5px;line-height:23.4px;color:#c9c9c9;font-weight:400;letter-spacing:-1.325px">GCP</span>
<span class="tx" id="s_Network" style="left:10.1px;top:868.24px;font-size:19.5px;line-height:23.4px;color:#c9c9c9;font-weight:400;letter-spacing:0.472px">Network</span>
<span class="tx" id="s_RUM" style="left:26.0px;top:964.74px;font-size:19.5px;line-height:23.4px;color:#c9c9c9;font-weight:400;letter-spacing:-0.382px">RUM</span>
<span class="tx" id="s_AppLogs" style="left:9.4px;top:1052.94px;font-size:19.5px;line-height:23.4px;color:#c9c9c9;font-weight:400;letter-spacing:-0.089px">AppLogs</span>
<span class="tx" id="s_Reports" style="left:13.6px;top:1144.24px;font-size:19.5px;line-height:23.4px;color:#c9c9c9;font-weight:400;letter-spacing:-0.205px">Reports</span>
<span class="tx" id="s_Admin" style="left:20.1px;top:1236.94px;font-size:19.5px;line-height:23.4px;color:#c9c9c9;font-weight:400;letter-spacing:0.193px">Admin</span>
</div>
</body></html>
